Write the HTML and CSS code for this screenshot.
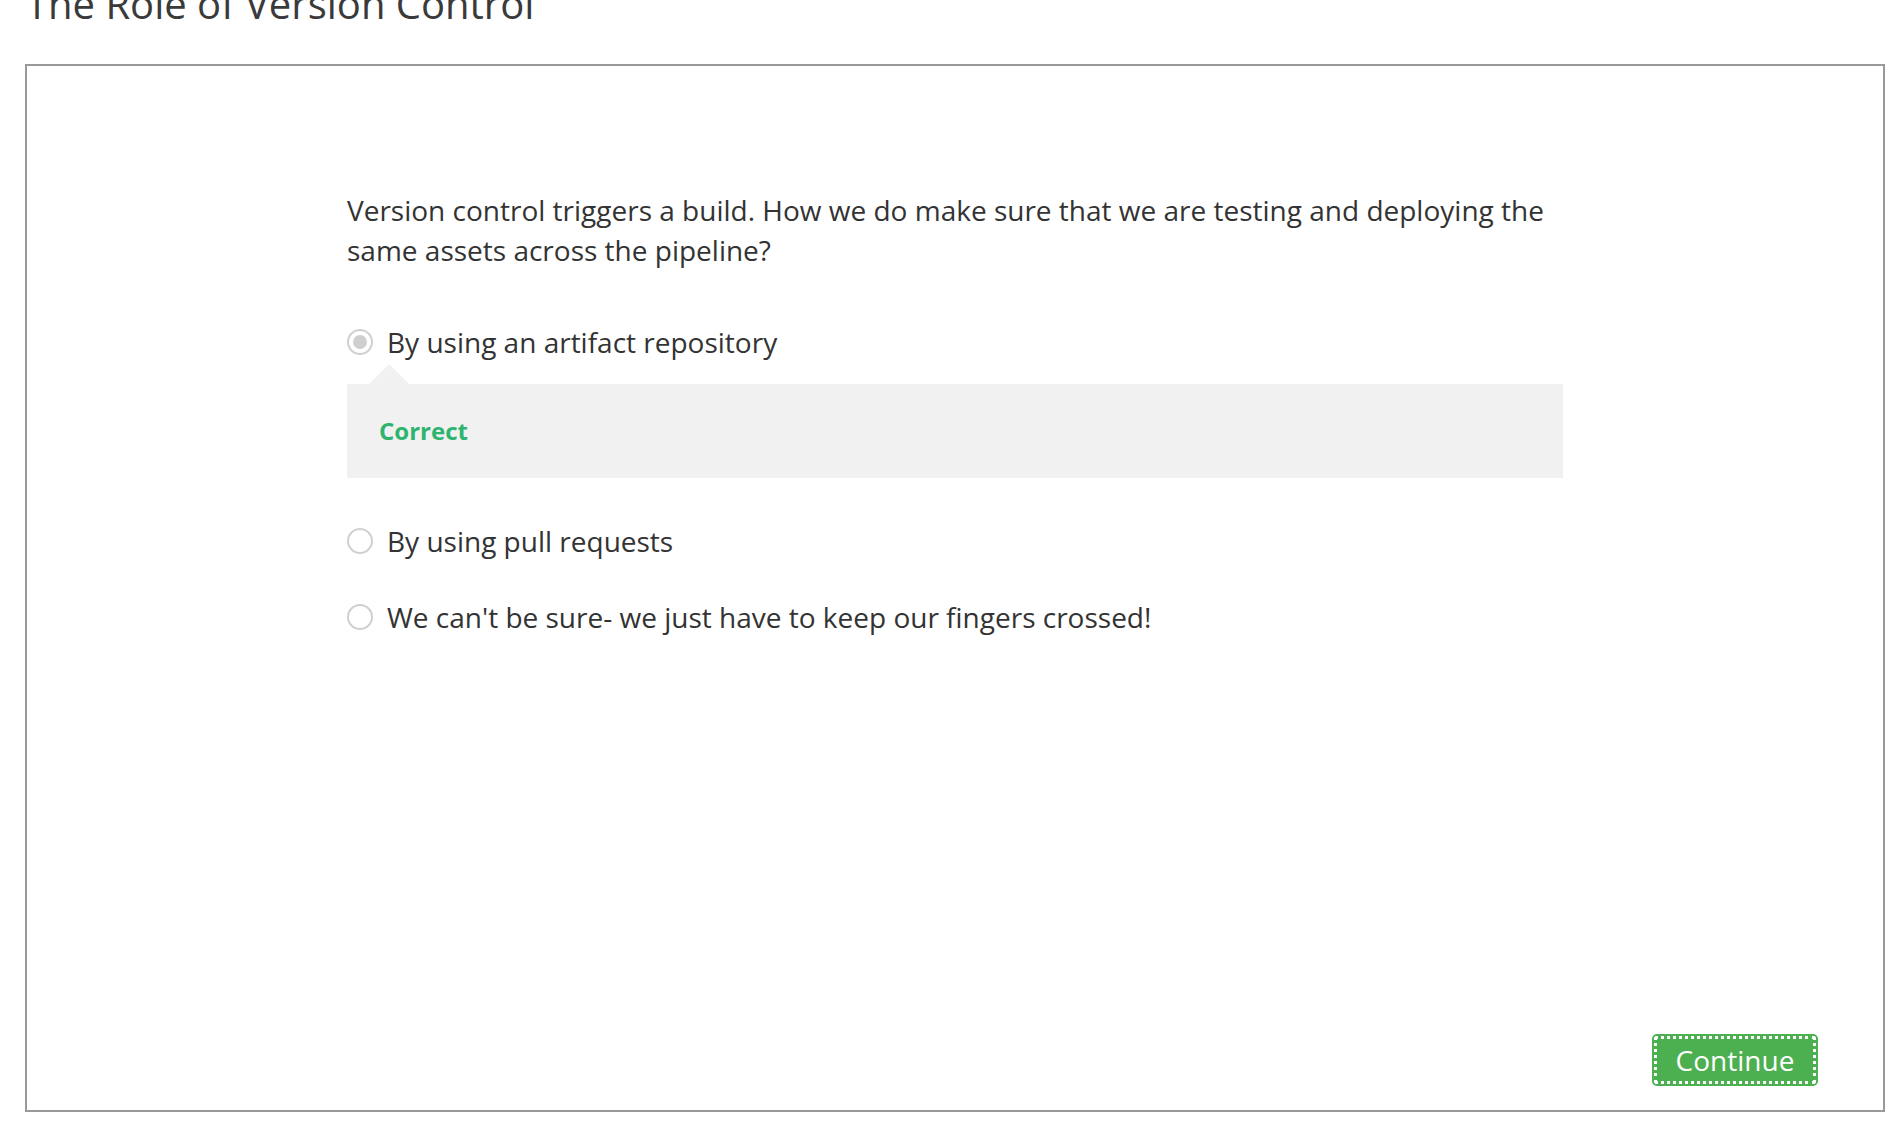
FILE: index.html
```html
<!DOCTYPE html>
<html>
<head>
<meta charset="utf-8">
<link rel="stylesheet" href="styles.css">
</head>
<body>
<div class="page">
  <h1 class="title">The Role of Version Control</h1>
  <div class="card">
    <div class="content">
      <p class="question">Version control triggers a build. How we do make sure that we are testing and deploying the same assets across the pipeline?</p>
      <div class="option selected">
        <span class="radio"><span class="dot"></span></span>
        <span class="label">By using an artifact repository</span>
      </div>
      <div class="feedback">
        <span class="correct">Correct</span>
      </div>
      <div class="option second">
        <span class="radio"></span>
        <span class="label">By using pull requests</span>
      </div>
      <div class="option third">
        <span class="radio"></span>
        <span class="label">We can't be sure- we just have to keep our fingers crossed!</span>
      </div>
    </div>
    <div class="footer">
      <button class="continue">Continue</button>
    </div>
  </div>
</div>
</body>
</html>
```

FILE: styles.css
```css
html, body {
  margin: 0;
  padding: 0;
  background: #fff;
}
body {
  font-family: "Open Sans", "Liberation Sans", sans-serif;
  color: #333;
  overflow: hidden;
}
.page {
  padding: 0 13px 0 25px;
}
.title {
  margin: -23px 0 0 1px;
  font-size: 40px;
  line-height: 54px;
  font-weight: 400;
  color: #3a3a3a;
  height: 54px;
}
.card {
  margin-top: 33px;
  border: 2px solid #999;
  height: 1044px;
  display: flex;
  flex-direction: column;
}
.content {
  width: 1216px;
  margin: 0 auto;
  padding-top: 124px;
}
.question {
  margin: 0;
  font-size: 28px;
  line-height: 40px;
  color: #333;
}
.option {
  display: flex;
  align-items: center;
  height: 40px;
  margin-top: 52px;
}
.option.second {
  margin-top: 43px;
}
.option.third {
  margin-top: 36px;
}
.radio {
  box-sizing: border-box;
  width: 26px;
  height: 26px;
  border: 2px solid #d0d0d0;
  border-radius: 50%;
  display: flex;
  align-items: center;
  justify-content: center;
  flex: none;
}
.dot {
  width: 14px;
  height: 14px;
  border-radius: 50%;
  background: #cfcfcf;
}
.label {
  margin-left: 14px;
  font-size: 28px;
  color: #333;
}
.feedback {
  position: relative;
  margin-top: 22px;
  background: #f1f1f1;
  height: 94px;
  display: flex;
  align-items: center;
  padding: 0 0 2px 32px;
  box-sizing: border-box;
}
.feedback::before {
  content: "";
  position: absolute;
  left: 22px;
  top: -20px;
  border-left: 20px solid transparent;
  border-right: 20px solid transparent;
  border-bottom: 20px solid #f1f1f1;
}
.correct {
  font-size: 24px;
  font-weight: 700;
  color: #2eb46f;
}
.footer {
  margin-top: auto;
  display: flex;
  justify-content: flex-end;
  padding: 0 65px 24px 0;
}
.continue {
  width: 166px;
  height: 52px;
  background: #4caf50;
  color: #fff;
  border: none;
  border-radius: 5px;
  font-family: "Open Sans", "Liberation Sans", sans-serif;
  font-size: 28px;
  outline: 3px dotted #fff;
  outline-offset: -5px;
  padding: 0;
}
```
